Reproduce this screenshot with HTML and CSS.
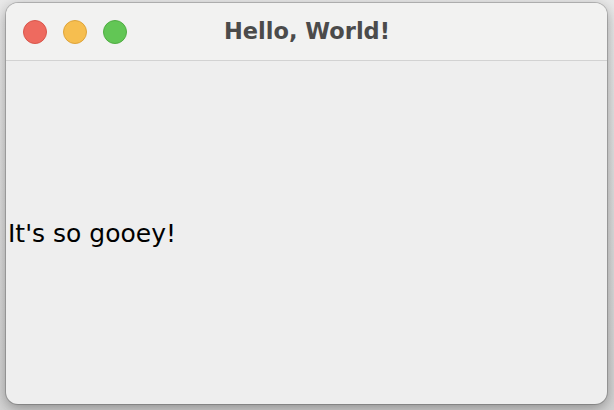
FILE: index.html
```html
<!DOCTYPE html>
<html>
<head>
<meta charset="utf-8">
<link rel="stylesheet" href="styles.css">
</head>
<body>
<div class="window">
  <div class="titlebar">
    <div class="lights">
      <span class="light red"></span>
      <span class="light yellow"></span>
      <span class="light green"></span>
    </div>
    <div class="title">Hello, World!</div>
  </div>
  <div class="content">
    <div class="label">It's so gooey!</div>
  </div>
</div>
</body>
</html>
```

FILE: styles.css
```css
html, body {
  margin: 0;
  padding: 0;
  width: 614px;
  height: 410px;
  overflow: hidden;
}
body {
  background: linear-gradient(#e9e9e9, #d4d4d4);
  padding: 3px 7px 6px 6px;
  box-sizing: border-box;
}
.window {
  width: 601px;
  height: 401px;
  border-radius: 12px;
  background: #eeeeee;
  box-shadow: 0 0 0 1px rgba(0,0,0,0.18), 0 4px 14px rgba(0,0,0,0.35);
  display: flex;
  flex-direction: column;
  overflow: hidden;
}
.titlebar {
  height: 57px;
  flex: none;
  background: #f2f2f1;
  border-bottom: 1px solid #d2d2d2;
  position: relative;
  display: flex;
  align-items: center;
  justify-content: center;
}
.lights {
  position: absolute;
  left: 17px;
  top: 17px;
  display: flex;
  gap: 16px;
}
.light {
  width: 24px;
  height: 24px;
  border-radius: 50%;
  box-sizing: border-box;
}
.red { background: #ee6a5f; border: 1px solid #d9564b; }
.yellow { background: #f6be4f; border: 1px solid #dea43a; }
.green { background: #62c655; border: 1px solid #50ad43; }
.title {
  font-family: "DejaVu Sans", sans-serif;
  font-weight: bold;
  font-size: 22.5px;
  color: #4b4b4b;
  margin-left: 1px;
  margin-bottom: 1px;
}
.content {
  flex: 1;
  display: flex;
  align-items: center;
}
.label {
  font-family: "DejaVu Sans", sans-serif;
  font-size: 25px;
  color: #000;
  margin-left: 2px;
  margin-top: 2px;
}
```
